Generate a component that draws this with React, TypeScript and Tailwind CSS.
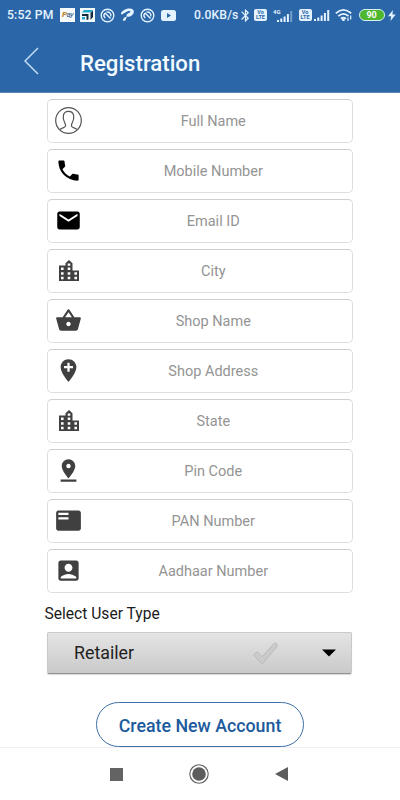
import React from 'react';
import {
  MdAccountBox,
  MdAddLocation,
  MdBluetooth,
  MdEmail,
  MdFeaturedPlayList,
  MdPhone,
  MdPinDrop,
  MdShoppingBasket,
} from 'react-icons/md';

const fields = [
  { label: 'Full Name', icon: <PersonIcon /> },
  { label: 'Mobile Number', icon: <MdPhone size={27} className="text-black" /> },
  { label: 'Email ID', icon: <MdEmail size={27} className="text-black" /> },
  { label: 'City', icon: <CityIcon /> },
  { label: 'Shop Name', icon: <MdShoppingBasket size={27} /> },
  { label: 'Shop Address', icon: <MdAddLocation size={27} /> },
  { label: 'State', icon: <CityIcon /> },
  { label: 'Pin Code', icon: <MdPinDrop size={27} /> },
  { label: 'PAN Number', icon: <MdFeaturedPlayList size={27} /> },
  { label: 'Aadhaar Number', icon: <MdAccountBox size={27} /> },
];

export default function App() {
  return (
    <div className="flex h-[800px] w-[400px] flex-col overflow-hidden bg-white font-['Roboto',sans-serif]">
      <header className="h-[93px] shrink-0 border-b border-[#5f85b4] bg-[#2a66a8]">
        <StatusBar />
        <div className="flex h-[62px] items-center pl-6">
          <svg width="15" height="28" viewBox="0 0 15 28" fill="none" stroke="#c3dcf8" strokeWidth="1.5">
            <path d="M14 1 1 14l13 13" />
          </svg>
          <h1 className="ml-[41px] pt-[4px] text-[22.2px] leading-7 font-medium text-[#f3fbff]">Registration</h1>
        </div>
      </header>

      <main className="flex flex-1 flex-col px-[47px] pt-[6px]">
        <div className="flex flex-col gap-[6px]">
          {fields.map((field) => (
            <div
              key={field.label}
              className="flex h-11 w-[305.5px] items-center rounded-[5px] border border-[#dedede] border-t-[#cfcfcf] pr-[7px] pl-[7px] text-[#404041]"
            >
              <span className="flex w-[27px] shrink-0 justify-center pb-[2px]">{field.icon}</span>
              <span className="flex-1 pt-px text-center text-[14.5px] text-[#949494]">{field.label}</span>
            </div>
          ))}
        </div>

        <p className="-ml-[2.5px] mt-[11px] text-[15.6px] leading-5 text-[#1c1c1c]">Select User Type</p>

        {/* User type dropdown */}
        <button className="mt-2 flex h-[42px] w-[305px] shrink-0 items-center rounded-[2px] border border-[#c9c9c9] border-b-[#929292] bg-linear-to-b from-[#e4e4e4] to-[#cacaca] pl-[26px] text-left shadow-[0_1px_1px_rgba(0,0,0,0.15)]">
          <span className="w-[179px] pt-px text-[17.8px] text-[#1f1f1f]">Retailer</span>
          <svg width="26" height="23" viewBox="0 0 26 23">
            <path
              d="M3 10.5 1.3 12.2q-.7.8 0 1.6l7 7.4q1 .9 1.9-.2L24.2 4.2q.7-.9-.2-1.7l-1.2-1.1q-1-.8-1.9.2L9.3 14.8l-4.5-4.4q-.9-.8-1.8.1Z"
              fill="#cbcbcb"
              stroke="#b8b8b8"
              strokeWidth="1"
            />
          </svg>
          <svg width="14" height="8" viewBox="0 0 14 8" className="ml-[43px]">
            <path d="M0 .5h14L7 7.5Z" fill="#000" />
          </svg>
        </button>

        <button className="ml-[49px] mt-7 h-[45px] w-[208px] shrink-0 rounded-full border border-[#3f6fa6] pt-[4px] text-[17.8px] font-medium text-[#1b5a9c]">
          Create New Account
        </button>
      </main>

      {/* Android navigation bar */}
      <nav className="flex h-[53px] shrink-0 items-center justify-between border-t border-[#f1f1f1] bg-white pr-[112px] pl-[110px] text-[#5d5d5d]">
        <span className="h-[13px] w-[13px] bg-[#636363]" />
        <svg width="20" height="20" viewBox="0 0 20 20">
          <circle cx="10" cy="10" r="9.2" fill="none" stroke="currentColor" strokeWidth="1.1" />
          <circle cx="10" cy="10" r="6.8" fill="currentColor" />
        </svg>
        <svg width="13" height="14" viewBox="0 0 13 14">
          <path d="M13 0v14L0 7Z" fill="currentColor" />
        </svg>
      </nav>
    </div>
  );
}

function StatusBar() {
  return (
    <div className="flex h-[30px] items-center pl-[7px] text-[#e4f3ff]">
      <span className="w-[53px] pt-px text-[12.2px] font-medium tracking-[0.15px] whitespace-nowrap">5:52 PM</span>
      <span className="flex h-[14px] w-[15px] items-center justify-center overflow-hidden bg-[#f6fafb] text-[8px] tracking-[-0.6px] text-[#31547b] italic">
        <b className="text-[#b97b22]">P</b>ay
      </span>
      <svg width="15" height="14" viewBox="0 0 15 14" className="ml-[5px]">
        <path d="M0 0h15v14H0Z" fill="#f4fafc" />
        <path d="M4 2h9L11 4.5H2Z" fill="#23a9ce" />
        <path d="M10.5 5 13 2.5V9l-2.5 3ZM2 6h6.5v5.5L6.5 12V8H2Z" fill="#152b3d" />
        <path d="M2 9h3v2.5H2Z" fill="#23a9ce" />
      </svg>
      <SyncIcon className="ml-[5px]" />
      <svg width="15" height="14" viewBox="0 0 15 14" fill="currentColor" className="ml-[5px]">
        <path d="M1 5.2C2.3 2.4 6.2.6 9.6.6c2.7 0 4.6 1.3 4.2 3.6-.5 2.7-3.6 4.9-6.2 4.6-1.7-.3-1.5-2 .2-3.2 1-.7 2.1-.9 2.5-1.6.3-.9-1-1.2-2.5-.8C5.6 3.9 4 5.4 2.5 6.2 1.4 6.7.7 6.1 1 5.2Z" />
        <path d="M7 8.2 5.6 12Q3.8 13.8 3 12.6 2.4 10.2 7 8.2Z" />
      </svg>
      <SyncIcon className="ml-[5px]" />
      <svg width="15" height="11" viewBox="0 0 15 11" className="ml-[6px]">
        <rect width="15" height="11" rx="2.5" fill="currentColor" />
        <path d="M6 3v5l4-2.5Z" fill="#2a66a8" />
      </svg>

      <span className="ml-[18px] w-[46px] pt-px text-[12.2px] font-medium tracking-[0.1px] whitespace-nowrap">0.0KB/s</span>
      <MdBluetooth size={15} className="-ml-[2px] shrink-0" />
      <VolteBadge className="ml-[1px]" />
      <div className="ml-[6px] flex items-end">
        <span className="-mr-[4px] h-[13px] text-[6px] leading-[6px] font-bold">4G</span>
        <SignalIcon faded />
      </div>
      <VolteBadge className="ml-[6px]" />
      <div className="ml-[2px]">
        <SignalIcon />
      </div>
      <svg width="18" height="14" viewBox="0 0 18 14" fill="none" stroke="currentColor" className="ml-[5px] shrink-0">
        <path d="M.8 5.3q7.5-6.8 15.4 0M3.3 8.2q5.2-4.7 10.2 0M5.9 10.8q2.6-2.2 5 0" strokeWidth="1.8" />
        <path d="M8.4 11v2" strokeWidth="2.4" />
        <path d="M13 13V9.5M15.7 7.5v4" strokeWidth="1.2" />
      </svg>
      <span className="ml-[6px] flex h-[12px] w-[26px] shrink-0 items-center justify-center rounded-full border border-[#d7edf2] bg-[#4db82e] text-[9px] leading-none font-bold text-white">
        90
      </span>
      <svg width="8" height="11" viewBox="0 0 8 11" className="ml-[3px] shrink-0">
        <path d="M5 0 0 6.3h3.2L2.5 11 7.7 4.5H4.4Z" fill="currentColor" />
      </svg>
    </div>
  );
}

function SyncIcon({ className = '' }: { className?: string }) {
  return (
    <svg width="15" height="15" viewBox="0 0 15 15" fill="none" stroke="currentColor" className={className}>
      <circle cx="7.5" cy="7.5" r="6.3" strokeWidth="1.4" />
      <path d="M5.2 10a3.4 3.4 0 0 1-.4-4.7M6.5 4.2a3.4 3.4 0 0 1 4.3 4.2M4.8 4.8l5.8 5.8" strokeWidth="1.4" />
    </svg>
  );
}

function VolteBadge({ className = '' }: { className?: string }) {
  return (
    <span
      className={`flex h-[12px] w-[13px] shrink-0 flex-col items-center justify-center rounded-[2px] bg-[#e4f3ff] text-[5.5px] leading-[5px] font-bold text-[#2a66a8] ${className}`}
    >
      <span>Vo</span>
      <span>LTE</span>
    </span>
  );
}

function SignalIcon({ faded = false }: { faded?: boolean }) {
  return (
    <svg width="16" height="11" viewBox="0 0 16 11" fill="currentColor" className="shrink-0">
      <path d="M0 9h2v2H0ZM3.3 7.5h2V11h-2ZM6.6 5.5h2V11h-2ZM9.9 3h2v8h-2Z" />
      <path d="M13.2 0h2v11h-2Z" opacity={faded ? 0.4 : 1} />
    </svg>
  );
}

function CityIcon() {
  return (
    <svg width="20" height="21" viewBox="0 0 20 21" fill="currentColor" fillRule="evenodd" className="shrink-0">
      <path d="M13.5 10.5V3.3L10 0 6.5 3.3v2.2H0V21h20V10.5ZM2 7.5h2.6V10H2Zm0 4.7h2.6v2.5H2Zm0 4.6h2.6v2.5H2ZM8.7 3.4h2.6v2.3H8.7Zm0 4.1h2.6V10H8.7Zm0 4.7h2.6v2.5H8.7Zm0 4.6h2.6v2.5H8.7Zm6.7-4.6H18v2.5h-2.6Zm0 4.6H18v2.5h-2.6Z" />
    </svg>
  );
}

function PersonIcon() {
  return (
    <svg width="27" height="27" viewBox="0 0 27 27" fill="none" stroke="#555" strokeWidth="1.2" className="shrink-0">
      <circle cx="13.5" cy="13.5" r="12.8" />
      <path d="M4.6 22.7c1.3-1.5 5.3-1.8 5.9-3.6.4-1.5-.1-2.2-.8-3.3-1.3-2.1-1.7-5-1.3-7.4.5-2.7 2.3-4 5.1-4s4.6 1.3 5.1 4c.4 2.4 0 5.3-1.3 7.4-.7 1.1-1.2 1.8-.8 3.3.6 1.8 4.6 2.1 5.9 3.6" />
    </svg>
  );
}
